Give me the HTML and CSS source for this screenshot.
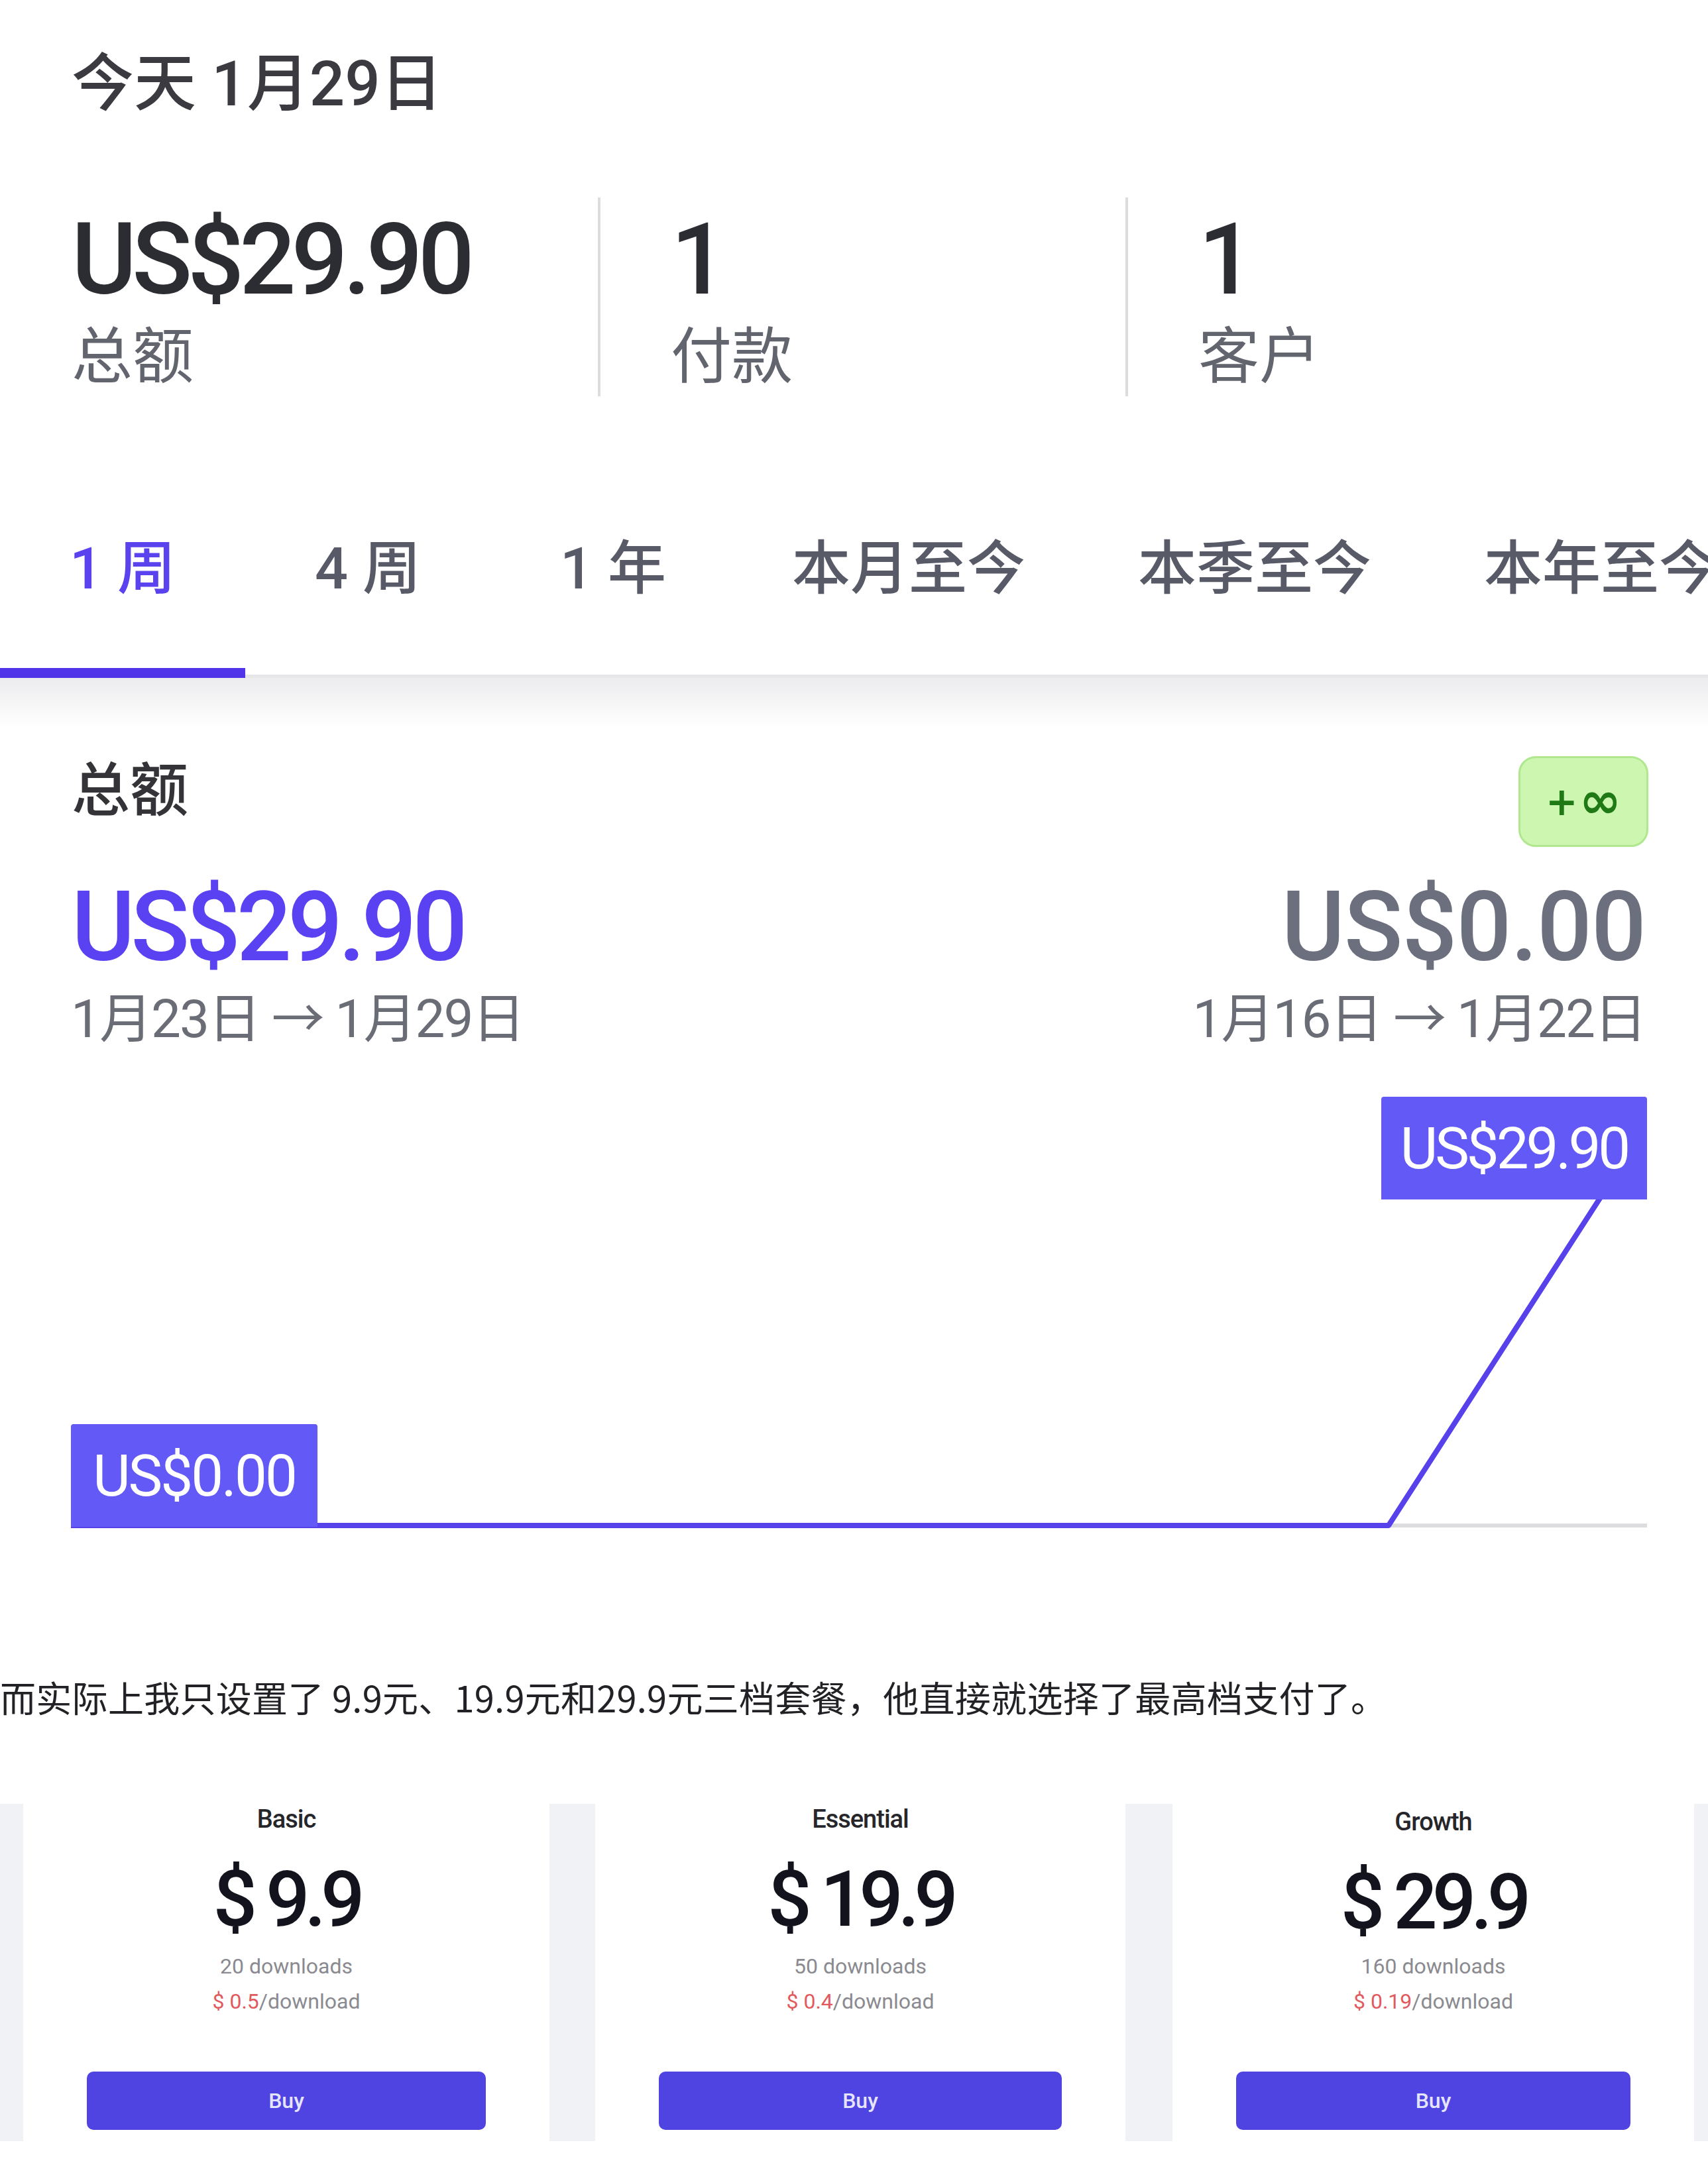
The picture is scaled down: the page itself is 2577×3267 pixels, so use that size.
FILE: index.html
```html
<!DOCTYPE html>
<html lang="zh-CN">
<head>
<meta charset="utf-8">
<title>总额</title>
<link rel="stylesheet" href="styles.css">
</head>
<body>
<div class="page">
  <header class="today">今天 1月29日</header>

  <section class="stats">
    <div class="stat">
      <div class="stat-value">US$29.90</div>
      <div class="stat-label">总额</div>
    </div>
    <div class="stat stat-split">
      <div class="stat-value">1</div>
      <div class="stat-label">付款</div>
    </div>
    <div class="stat stat-split">
      <div class="stat-value">1</div>
      <div class="stat-label">客户</div>
    </div>
  </section>

  <nav class="tabs">
    <div class="tab active">1 周</div>
    <div class="tab">4 周</div>
    <div class="tab">1 年</div>
    <div class="tab">本月至今</div>
    <div class="tab">本季至今</div>
    <div class="tab">本年至今</div>
  </nav>
  <div class="tabs-shadow"></div>

  <section class="summary">
    <div class="summary-head">
      <div class="summary-title">总额</div>
      <div class="badge"><span class="badge-plus">+</span><span class="badge-inf">∞</span></div>
    </div>
    <div class="summary-row">
      <div class="period">
        <div class="amount current">US$29.90</div>
        <div class="range">1月23日 → 1月29日</div>
      </div>
      <div class="period period-right">
        <div class="amount previous">US$0.00</div>
        <div class="range">1月16日 → 1月22日</div>
      </div>
    </div>
    <div class="chart">
      <svg class="chart-svg" width="2378" height="651" viewBox="0 0 2378 651">
        <line x1="1988" y1="647" x2="2378" y2="647" stroke="#dddde0" stroke-width="6"/>
        <polyline points="0,647 1988,647 2309,150" fill="none" stroke="#5641ea" stroke-width="8" stroke-linejoin="round"/>
      </svg>
      <div class="chart-label label-end">US$29.90</div>
      <div class="chart-label label-start">US$0.00</div>
    </div>
  </section>

  <p class="note">而实际上我只设置了 9.9元、19.9元和29.9元三档套餐，他直接就选择了最高档支付了。</p>

  <section class="pricing">
    <div class="plan">
      <div class="plan-name">Basic</div>
      <div class="plan-price">$ 9.9</div>
      <div class="plan-count">20 downloads</div>
      <div class="plan-unit"><span class="unit-price">$ 0.5</span>/download</div>
      <div class="plan-buy">Buy</div>
    </div>
    <div class="plan">
      <div class="plan-name">Essential</div>
      <div class="plan-price">$ 19.9</div>
      <div class="plan-count">50 downloads</div>
      <div class="plan-unit"><span class="unit-price">$ 0.4</span>/download</div>
      <div class="plan-buy">Buy</div>
    </div>
    <div class="plan plan-shifted">
      <div class="plan-name">Growth</div>
      <div class="plan-price">$ 29.9</div>
      <div class="plan-count">160 downloads</div>
      <div class="plan-unit"><span class="unit-price">$ 0.19</span>/download</div>
      <div class="plan-buy">Buy</div>
    </div>
  </section>
</div>
</body>
</html>
```

FILE: styles.css
```css
* { box-sizing: border-box; }

html, body {
  margin: 0;
  padding: 0;
  background: #ffffff;
}

.page {
  width: 2577px;
  height: 3267px;
  overflow: hidden;
  font-family: Roboto, "Noto Sans CJK SC", sans-serif;
  color: #333338;
}

/* ---------- header ---------- */
.today {
  padding: 80px 0 0 108px;
  font-size: 94px;
  line-height: 94px;
  color: #3a3a40;
  font-weight: 500;
}

/* ---------- stats ---------- */
.stats {
  display: grid;
  grid-template-columns: 794px 796px 1fr;
  margin-top: 124px;
  padding-left: 108px;
}

.stat {
  height: 300px;
  padding-top: 19px;
}

.stat-split {
  border-left: 4px solid #dcdcdf;
  padding-left: 106px;
}

.stat-value {
  font-size: 150px;
  line-height: 150px;
  font-weight: 500;
  letter-spacing: -7px;
  color: #2c2d33;
}

.stat-label {
  margin-top: 26px;
  font-size: 92px;
  line-height: 92px;
  color: #62646e;
}

/* ---------- tabs ---------- */
.tabs {
  display: flex;
  margin-top: 216px;
  white-space: nowrap;
  border-bottom: 5px solid #e6e6e8;
}

.tab {
  flex: none;
  min-width: 370px;
  padding: 0 85px 106px;
  text-align: center;
  font-size: 88px;
  line-height: 88px;
  font-weight: 500;
  color: #585b67;
  border-bottom: 15px solid transparent;
  margin-bottom: -5px;
}

.tab.active {
  color: #5a43ee;
  border-bottom-color: #5036e8;
}

.tabs-shadow {
  height: 75px;
  background: linear-gradient(#ececee, #ffffff);
}

/* ---------- summary ---------- */
.summary {
  padding: 43px 92px 0 107px;
}

.summary-head {
  display: flex;
  justify-content: space-between;
  align-items: flex-start;
}

.summary-title {
  margin-top: 8px;
  padding-left: 1px;
  font-size: 88px;
  line-height: 88px;
  color: #333338;
  font-weight: 500;
}

.badge {
  width: 196px;
  height: 137px;
  margin-right: -2px;
  display: flex;
  align-items: center;
  justify-content: center;
  gap: 2px;
  background: #cdf7b1;
  border: 3px solid #b0e78f;
  border-radius: 26px;
  color: #1f7a16;
  font-family: "DejaVu Sans", sans-serif;
  font-weight: 700;
  line-height: 1;
}

.badge-plus {
  font-size: 58px;
}

.badge-inf {
  font-size: 76px;
  position: relative;
  top: -2px;
}

.summary-row {
  display: flex;
  justify-content: space-between;
  margin-top: 49px;
}

.period-right {
  text-align: right;
}

.amount {
  font-size: 146px;
  line-height: 146px;
  font-weight: 500;
}

.amount.current {
  color: #5a42f2;
  padding-left: 1px;
  letter-spacing: -6px;
}

.amount.previous {
  color: #6c6f7e;
  margin-right: 2px;
  letter-spacing: -1px;
}

.range {
  margin-top: 25px;
  font-size: 80px;
  line-height: 80px;
  color: #6a6c76;
  letter-spacing: -2px;
}

.period-right .range {
  margin-right: 2px;
}

/* ---------- chart ---------- */
.chart {
  position: relative;
  width: 2378px;
  height: 651px;
  margin-top: 77px;
}

.chart-svg {
  display: block;
}

.chart-label {
  position: absolute;
  display: flex;
  align-items: center;
  justify-content: center;
  height: 155px;
  background: #6259f6;
  color: #ffffff;
  font-size: 87px;
  letter-spacing: -4px;
  border-radius: 4px 4px 0 0;
}

.label-end {
  left: 1977px;
  top: 0;
  width: 401px;
}

.label-start {
  left: 0;
  top: 494px;
  width: 372px;
  letter-spacing: -3px;
}

/* ---------- note ---------- */
.note {
  margin: 228px 0 0;
  padding: 0;
  font-family: "Noto Sans CJK SC", sans-serif;
  font-size: 54px;
  line-height: 54px;
  color: #222226;
  letter-spacing: 0.3px;
  white-space: nowrap;
}

/* ---------- pricing ---------- */
.pricing {
  display: grid;
  grid-template-columns: 794px 800px 789px;
  column-gap: 69px;
  margin-top: 134px;
  padding-left: 35px;
  background: #f0f2f5;
}

.plan {
  display: flex;
  flex-direction: column;
  align-items: center;
  background: #ffffff;
  padding: 4px 96px 17px;
  text-align: center;
}

.plan:nth-child(3) {
  margin-left: 2px;
}

.plan-name {
  font-size: 38px;
  line-height: 38px;
  font-weight: 500;
  color: #26262b;
  letter-spacing: -1px;
}

.plan-price {
  margin-top: 44px;
  font-size: 117px;
  line-height: 117px;
  font-weight: 500;
  color: #12131c;
  letter-spacing: -8px;
}

.plan-count {
  margin-top: 26px;
  font-size: 32px;
  line-height: 32px;
  color: #8a8a90;
}

.plan-unit {
  margin-top: 21px;
  font-size: 32px;
  line-height: 32px;
  color: #8a8a90;
}

.unit-price {
  color: #e05a5e;
}

.plan-buy {
  align-self: stretch;
  margin-top: 90px;
  height: 88px;
  display: flex;
  align-items: center;
  justify-content: center;
  background: #4f43e2;
  border-radius: 10px;
  color: #e4e4ff;
  font-size: 32px;
  font-weight: 500;
}

.plan-shifted .plan-name,
.plan-shifted .plan-price {
  position: relative;
  top: 4px;
}
```
